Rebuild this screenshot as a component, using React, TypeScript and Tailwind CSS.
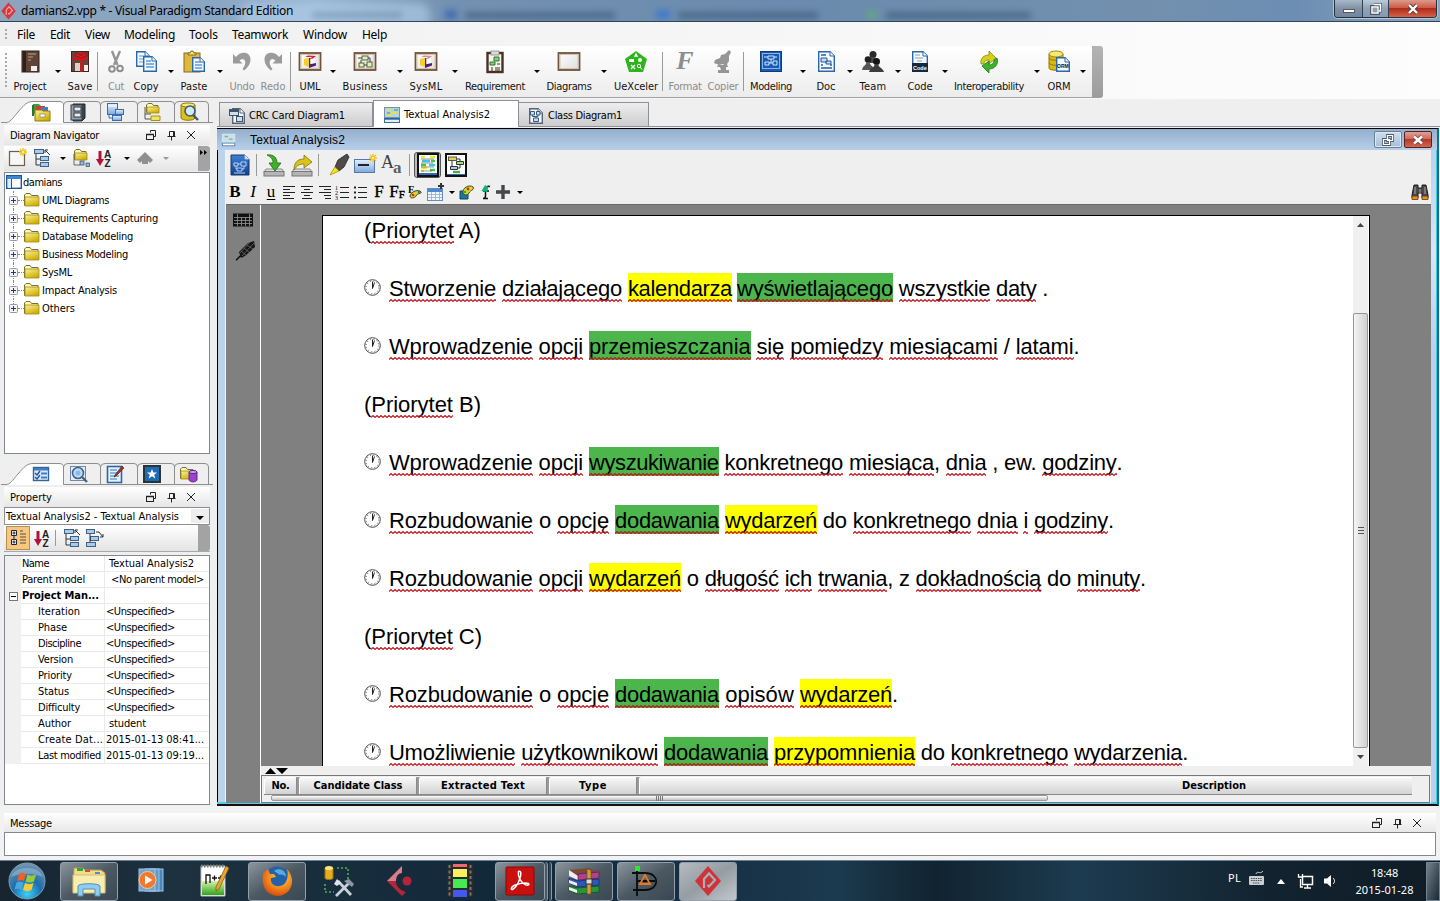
import { useLayoutEffect, useRef, useState } from 'react';
import type { ReactNode } from 'react';

const UI = "font-['DejaVu_Sans_Condensed','Noto_Sans',sans-serif] text-[11px]";

/* Text stretched or tightened with letter spacing to fill a given width. */
function Fit({ w, children, className = '' }: { w: number; children: ReactNode; className?: string }) {
  const ref = useRef<HTMLSpanElement>(null);
  const [ls, setLs] = useState(0);
  useLayoutEffect(() => {
    const el = ref.current;
    if (!el) return;
    const n = (el.textContent || '').length || 1;
    el.style.letterSpacing = '0px';
    const gap = (w - el.getBoundingClientRect().width) / n;
    el.style.letterSpacing = gap + 'px';
    setLs(gap);
  }, [w]);
  return (
    <span ref={ref} className={'inline-block shrink-0 whitespace-pre ' + className} style={{ letterSpacing: ls }}>
      {children}
    </span>
  );
}

function Svg({ s = 24, h, vb, children, className = '' }: { s?: number; h?: number; vb?: string; children: ReactNode; className?: string }) {
  return (
    <svg width={s} height={h ?? s} viewBox={vb ?? `0 0 ${s} ${h ?? s}`} className={'block shrink-0 ' + className} fill="none">
      {children}
    </svg>
  );
}

const Defs = () => (
  <svg width="0" height="0" className="absolute">
    <defs>
      <linearGradient id="fold" x1="0" y1="0" x2="0.6" y2="1"><stop offset="0" stopColor="#fbf29a" /><stop offset="1" stopColor="#cfae00" /></linearGradient>
      <linearGradient id="blue" x1="0" y1="0" x2="0" y2="1"><stop offset="0" stopColor="#e4f1fd" /><stop offset="1" stopColor="#7ba9dc" /></linearGradient>
      <linearGradient id="navy" x1="0" y1="0" x2="0" y2="1"><stop offset="0" stopColor="#3f7fd2" /><stop offset="1" stopColor="#12418f" /></linearGradient>
      <linearGradient id="board" x1="0" y1="0" x2="1" y2="1"><stop offset="0" stopColor="#ffffff" /><stop offset="1" stopColor="#dcdcdc" /></linearGradient>
      <linearGradient id="grn" x1="0" y1="0" x2="0" y2="1"><stop offset="0" stopColor="#d8f0b0" /><stop offset="1" stopColor="#2fa51c" /></linearGradient>
      <radialGradient id="orb" cx="0.5" cy="0.85" r="0.8"><stop offset="0" stopColor="#3fd0f5" /><stop offset="0.5" stopColor="#1a6fae" /><stop offset="1" stopColor="#6f93ad" /></radialGradient>
      <radialGradient id="ffx" cx="0.6" cy="0.3" r="0.8"><stop offset="0" stopColor="#ffd93b" /><stop offset="0.6" stopColor="#f07a1a" /><stop offset="1" stopColor="#c93d0c" /></radialGradient>
    </defs>
  </svg>
);

/* Zigzag long enough for the widest word; the svg around it clips it. */
const ZIGZAG = 'M0 2.5' + 'l2 -2l2 2'.repeat(50);

const Star = ({ x, y }: { x: number; y: number }) => (
  <g transform={`translate(${x} ${y})`} stroke="#f0c419" strokeWidth="1.4"><path d="M0-4V4M-4 0H4M-3-3L3 3M3-3L-3 3" /><circle r="1.2" fill="#fff3a0" stroke="none" /></g>
);
const Folder = ({ x = 0, y = 0, w = 15, h = 11 }: { x?: number; y?: number; w?: number; h?: number }) => (
  <g transform={`translate(${x} ${y})`}>
    <path d={`M.5 ${h + 0.5}V2L2 .5H6L7.5 2.5H${w - 1}V${h + 0.5}Z`} fill="#fff8b8" stroke="#77702e" />
    <path d={`M1 4H${w}V${h + 1}H1Z`} fill="url(#fold)" stroke="#a08c1c" strokeWidth=".8" />
  </g>
);
const Page = ({ x = 0, y = 0, w = 15, h = 19, c = '#2b67ad' }: { x?: number; y?: number; w?: number; h?: number; c?: string }) => (
  <g transform={`translate(${x} ${y})`}>
    <path d={`M.7.7H${w - 5}L${w - 0.7} 5V${h - 0.7}H.7Z`} fill="#f4f9ff" stroke={c} strokeWidth="1.4" />
    <path d={`M${w - 5} .7V5H${w - 0.7}`} fill="#fff" stroke={c} />
  </g>
);
const Frame = ({ children }: { children?: ReactNode }) => (
  <g><rect x="1.5" y="3" width="21" height="17" fill="url(#board)" stroke="#70523d" strokeWidth="1.8" /><rect x="3" y="4.5" width="18" height="14" stroke="#d6c3ac" />{children}</g>
);
const Cube = ({ c }: { c: string }) => (
  <g><path d="M6 9L11 8V17L6 15Z" fill="#f6cf2b" /><path d="M11 8L12.500 8V17L11 17.500Z" fill="#4b2178" /><path d="M12.500 9L17 8V13L12.500 14.500Z" fill="#fff" /><path d="M11 14.500L18 13V15.500L11 18Z" fill="#4b2178" /><path d="M7 7L10 5.500L18 6L15 8.500L12 9L14 7Z" fill={c} /></g>
);
const Diamond = ({ fill, line }: { fill: string; line: string }) => (
  <g><path d="M17 2L30 17L17 32L4 17Z" fill={fill} /><path d="M13 24V15L18 9.500L24 16L18 22.500L16.500 21" stroke={line} strokeWidth="2.200" /></g>
);

const I: Record<string, ReactNode> = {
  project: <Svg><rect x="4" y="1" width="17" height="21" fill="#5f4436" stroke="#32221a" /><path d="M5 1H8V22H5Z" fill="#2e2019" /><path d="M10 4H18M10 7H15M10 10H13" stroke="#b8a294" /><rect x="13" y="16" width="6" height="5" fill="#eee" /></Svg>,
  save: <Svg><rect x="3.500" y="1.500" width="17" height="20" fill="#62473a" stroke="#3a2820" /><rect x="7" y="13" width="5" height="8" fill="#d9d2cc" /><rect x="16" y="15" width="4" height="6" fill="#eee" /><path d="M13.500 2V22M4 8.500H20" stroke="#d8141c" strokeWidth="2.400" /><path d="M13 8L7 5.500L7.500 2.500L13 5.500L18.500 2.500L19 5.500Z" fill="#e11a22" stroke="#8e0d12" strokeWidth=".7" /></Svg>,
  cut: <Svg><path d="M8 1L13.500 15M16 1L10 15" stroke="#959595" strokeWidth="2.400" /><circle cx="8" cy="19" r="2.800" stroke="#8f8f8f" strokeWidth="2" /><circle cx="16" cy="18.500" r="2.800" stroke="#8f8f8f" strokeWidth="2" /></Svg>,
  copy: <Svg><Page x={2} y={1} w={14} h={16} /><path d="M5 6H10M5 9H12M5 12H9" stroke="#5a9be0" /><Page x={9} y={6} w={14} h={16} /><path d="M12 11H17M12 14H20M12 17H20" stroke="#5a9be0" strokeWidth="1.4" /></Svg>,
  paste: <Svg><rect x="2" y="3" width="16" height="19" fill="#e0b83a" stroke="#8a6a1c" /><path d="M6 5V3H8L9 1H11L12 3H14V5Z" fill="#f8e277" stroke="#8a6a1c" /><Page x={10} y={7} w={13} h={15} /><path d="M13 12H18M13 15H20M13 18H20" stroke="#5a9be0" strokeWidth="1.3" /></Svg>,
  undo: <Svg><path d="M3 4L6 7C10 1 20 1 20.500 9C20.500 15 17 18 14 20.500L12.500 19C15 16 16.500 12 14 9.500C12.500 8.500 11 9 9.500 10.500L12.500 13.500H3Z" fill="#9b9b9b" /></Svg>,
  redo: <Svg><path d="M21 4L18 7C14 1 4 1 3.500 9C3.500 15 7 18 10 20.500L11.500 19C9 16 7.500 12 10 9.500C11.500 8.500 13 9 14.500 10.500L11.500 13.500H21Z" fill="#9b9b9b" /></Svg>,
  uml: <Svg><Frame><Cube c="#e0203c" /></Frame></Svg>,
  sysml: <Svg><Frame><Cube c="#e68a95" /></Frame></Svg>,
  business: <Svg><Frame><rect x="9" y="6" width="6" height="4" fill="#e8edc1" stroke="#55663c" /><rect x="6" y="13" width="5" height="4" fill="#e8edc1" stroke="#55663c" /><rect x="14" y="12" width="5" height="5" fill="#e8edc1" stroke="#55663c" /><path d="M5 8H9M15 8H17V12M8 10V13M11 15H14" stroke="#3a4430" /></Frame></Svg>,
  requirement: <Svg><rect x="4.5" y="3" width="15" height="19" fill="#f6f4ee" stroke="#4b3021" strokeWidth="2.4" /><rect x="8" y="1" width="8" height="4" fill="#dadada" stroke="#888" strokeWidth=".8" /><path d="M11 7H16V11H11ZM7 12H12V15H7Z" fill="#8dcc80" stroke="#267a28" /><path d="M8 18H10M12 18H17M8 20H10M12 20H17M14 14H17" stroke="#333" /></Svg>,
  diagrams: <Svg><Frame /></Svg>,
  uex: <Svg><path d="M12 1L23 9L19 22H5L1 9Z" fill="#2bb41c" /><rect x="5" y="9" width="5" height="3" fill="#fff" /><circle cx="16" cy="10" r="2" fill="#fff" /><path d="M12 4L13 6H11ZM7 15L11 19M11 15L7 19" stroke="#fff" strokeWidth="1.3" fill="#fff" /><circle cx="15" cy="16" r="1.7" stroke="#fff" /><path d="M16 17L18 19.500" stroke="#fff" /></Svg>,
  copier: <Svg><path d="M18 0L14 4L10 5L9 8L4 10L3 13L8 15L12 14L13 15H7L6 17L9 17L10 20H7V23H18V20H15L15 17H17L16 14L18 11V6L20 2Z" fill="#959595" /></Svg>,
  modeling: <Svg><rect x="1.5" y="1.5" width="21" height="20" fill="#175bb4" stroke="#163b72" /><rect x="3.5" y="3.5" width="17" height="15" stroke="#83b6ee" /><path d="M9 6H15V9H9ZM6 12H10V15H6ZM14 11H18V15H14ZM5 7H9M15 7H18M12 9V13M10 13H14" stroke="#d5e8fb" /></Svg>,
  doc: <Svg><Page x={4} y={1} w={17} h={21} /><path d="M7 5H12M7 18H18M7 15H9M16 15H18" stroke="#2b5c98" strokeWidth="1.3" /><path d="M7 8H13V12H7ZM12 11H17V14H12Z" fill="#c5def7" stroke="#285a95" /></Svg>,
  team: <Svg><circle cx="12" cy="4.500" r="3.500" fill="#2b2b2b" /><path d="M10 7H14L15 10L18 13H7L9 10Z" fill="#4a4a4a" /><circle cx="7" cy="9.500" r="3.300" fill="#202020" /><path d="M1 20C2 15 5 16 5.500 12H8.500C9 16 12 15 13 20Z" fill="#555" /><circle cx="15.500" cy="11.500" r="3.500" fill="#151515" /><path d="M8 22C9 18 13 18 14 14H17C18 18 22 18 23 22Z" fill="#3c3c3c" /></Svg>,
  code: <Svg><Page x={4} y={1} w={16} h={17} /><path d="M7 5H12M7 8H15M9 11H14" stroke="#8ba0b6" /><rect x="4" y="13" width="16" height="9" fill="#15283e" /><text x="5" y="19.500" fontSize="5.500" fontWeight="bold" fill="#fff" fontFamily="Liberation Sans">Code</text></Svg>,
  interop: <Svg><path d="M4 14C3 8 7 5 12 5V1L19 8L12 14V10C9 10 7 11 7 14Z" fill="#d6cf1c" stroke="#7f8912" strokeWidth=".8" /><path d="M20 8C22 14 18 19 12 19V23L5 16L12 11V15C15 15 17 13 17 10Z" fill="#3cb42a" stroke="#267418" strokeWidth=".8" /></Svg>,
  orm: <Svg><path d="M2 4V18C2 21 16 21 16 18V4" fill="#dcb910" stroke="#907900" /><ellipse cx="9" cy="4" rx="7" ry="3" fill="#f6ea70" stroke="#a08912" /><path d="M2 8C3 11 15 11 16 8M2 13C3 16 15 16 16 13" stroke="#8f7b05" /><Page x={9} y={7} w={14} h={15} /><text x="10" y="17.500" fontSize="5" fontWeight="bold" fill="#111" fontFamily="Liberation Sans">ORM</text></Svg>,
  /* side tabs */
  tabFolders: <Svg s={20}><path d="M2 2H8L10 4V12H2Z" fill="#3aa03a" /><path d="M5 4H14V12H5Z" fill="#cf3a3a" /><path d="M10 5H17V12H10Z" fill="#4a79c8" /><path d="M2 3V14" stroke="#2b742b" strokeWidth="2" /><path d="M4 8H11L12 9H19V19H4Z" fill="url(#fold)" stroke="#8d7a14" /><rect x="9" y="12" width="5" height="3" fill="#fff" stroke="#887" strokeWidth=".7" /></Svg>,
  tabBook: <Svg s={20}><path d="M5 2H17V16L14 19H5Z" fill="#3a444e" stroke="#20282f" /><rect x="3" y="3" width="11" height="15" fill="#92a2b0" stroke="#323c46" /><rect x="6" y="5" width="7" height="4" fill="#e8edf3" stroke="#333" /><rect x="6" y="11" width="7" height="4" fill="#e8edf3" stroke="#333" /></Svg>,
  tabClasses: <Svg s={20}><rect x="2.5" y="1.5" width="10" height="11" fill="url(#blue)" stroke="#3c6ba9" /><path d="M3 4H12" stroke="#fff" /><rect x="10.5" y="7.5" width="8" height="5" fill="url(#blue)" stroke="#3c6ba9" /><rect x="7.5" y="13.5" width="9" height="5" fill="url(#blue)" stroke="#3c6ba9" /><path d="M4 13V16H7" stroke="#3c6ba9" /></Svg>,
  tabTree: <Svg s={20}><Folder x={4} y={1} w={13} h={9} /><path d="M3 5V17H9M3 12H9" stroke="#555" /><path d="M9 14H18V18.500H9Z" fill="#f3e35d" stroke="#9f8f1c" /></Svg>,
  tabSearch: <Svg s={20}><path d="M2 3V16C3 19 15 19 16 16V3" fill="#ddc11a" stroke="#8b7910" /><ellipse cx="9" cy="3" rx="7" ry="2" fill="#f5eb86" stroke="#8b7910" /><circle cx="11" cy="9" r="5" fill="#cfe8fa" stroke="#3f5a70" strokeWidth="1.6" /><path d="M14 13L19 18" stroke="#3f5a70" strokeWidth="2.4" /></Svg>,
  tabProps: <Svg s={20}><rect x="2.500" y="3.500" width="15" height="13" fill="#dcebfb" stroke="#33659b" strokeWidth="1.4" /><rect x="3" y="4" width="14" height="2.500" fill="#3f7dc2" /><path d="M4 9L6 11L9 7M4 13L6 15L9 11" stroke="#1d54a8" strokeWidth="1.4" /><path d="M10 9.500H16M10 13.500H16" stroke="#3f7dc2" strokeWidth="2" /></Svg>,
  tabMag: <Svg s={20}><rect x="2.5" y="2.5" width="15" height="14" fill="#e8edf4" stroke="#7089a6" /><circle cx="10" cy="9" r="5.5" fill="#bcdcf8" stroke="#41638b" strokeWidth="1.6" /><circle cx="10" cy="9" r="2.5" fill="#87b9ea" /><path d="M14 13L19 18" stroke="#41638b" strokeWidth="2.4" /></Svg>,
  tabNote: <Svg s={20}><rect x="2.5" y="2.5" width="14" height="16" fill="#e6f2fe" stroke="#2c67a9" strokeWidth="1.6" /><path d="M5 6H12M5 9H14M5 12H14M5 15H12" stroke="#3576ba" /><path d="M17 2L10 11L9 13L11 12L19 4Z" fill="#a3342d" stroke="#4b1512" strokeWidth=".6" /></Svg>,
  tabStar: <Svg s={20}><rect x="2" y="2" width="16" height="16" fill="#1b6cb3" stroke="#2c3235" strokeWidth="2" /><path d="M10 5L11.300 8.500H15L12.200 10.800L13.300 14.500L10 12.300L6.700 14.500L7.800 10.800L5 8.500H8.700Z" fill="#fff" /></Svg>,
  tabPurple: <Svg s={20}><Folder x={1} y={3} w={14} h={11} /><path d="M10 8V16C11 18.500 17 18.500 18 16V8" fill="#9a42cf" stroke="#612491" /><ellipse cx="14" cy="8" rx="4" ry="1.6" fill="#cf96ee" stroke="#612491" /></Svg>,
  /* panel toolbars */
  newDoc: <Svg s={20}><rect x="1.5" y="3.5" width="15" height="14" fill="#f7f7f5" stroke="#6a5e55" strokeWidth="1.2" /><Star x={15} y={4} /></Svg>,
  hier: <Svg s={20}><g fill="#a9cbec" stroke="#3f5f83"><rect x="2.5" y="1.5" width="9" height="4" /><rect x="8.5" y="8.5" width="8" height="4" /><rect x="8.5" y="14.5" width="8" height="4" /></g><path d="M4 6V17H8M4 11H8M18 7L13 2M13 5V2H16" stroke="#333" /></Svg>,
  hierDown: <Svg s={20}><g fill="#a9cbec" stroke="#3f5f83"><rect x="1.5" y="1.5" width="8" height="4" /><rect x="5.5" y="8.5" width="8" height="4" /><rect x="1.5" y="14.5" width="9" height="4" /></g><path d="M11 4H14L18 9M15 9H18V6M5 6V14" stroke="#333" /></Svg>,
  folderOpen: <Svg s={20}><Folder x={3} y={1} w={13} h={10} /><path d="M3 6V17H9" stroke="#666" /><rect x="9" y="13" width="4" height="4" fill="#8eb8df" stroke="#345" strokeWidth=".7" /><rect x="15" y="15" width="3.5" height="3.5" fill="#8eb8df" stroke="#345" strokeWidth=".7" /></Svg>,
  sort: <Svg s={20}><path d="M5 3V13" stroke="#b3123d" strokeWidth="3" /><path d="M1 11H9L5 18Z" fill="#b3123d" /><text x="9" y="9.5" fontSize="10" fontWeight="bold" fill="#222" fontFamily="Liberation Sans">A</text><text x="9.5" y="18.500" fontSize="10" fontWeight="bold" fill="#222" fontFamily="Liberation Sans">Z</text></Svg>,
  up: <Svg s={20}><path d="M10 4L18 12L15 15L13 13V16H7V13L5 15L2 12Z" fill="#8f8f8f" /></Svg>,
  categ: <Svg s={20}><path d="M3.500 2.500H8.500V7.500H3.500ZM3.500 11.500H8.500V16.500H3.500Z" fill="#e8eefb" stroke="#223" /><path d="M4.500 5H7.500M6 3.500V6.500M4.500 14H7.500M6 12.500V15.500M6 7.500V11" stroke="#223" /><path d="M12 3H15M12 6H18M12 9H18M12 12H18M12 15H18" stroke="#8a7a58" strokeWidth="1.4" /></Svg>,
  table16: <Svg s={16}><rect x=".7" y="1.7" width="14.6" height="12.6" fill="#fff" stroke="#1d5796" strokeWidth="1.4" /><path d="M1 2H15V5H1Z" fill="#3d86d0" /><path d="M5.5 5V14" stroke="#1d5796" /><path d="M2 6H5V14H2Z" fill="#d9eafa" /></Svg>,
  /* editor toolbar */
  bigdoc: <Svg><path d="M3 2H17L21 6V22H3Z" fill="url(#navy)" stroke="#17386d" /><path d="M17 2V6H21" fill="#fff" stroke="#a4c3ec" /><path d="M6 10H10V13H6ZM13 9H18V13H13ZM9 15H14V18H9ZM10 11H13M8 13V16H9M16 13V16H14M6 20H17" stroke="#b5d2f6" /></Svg>,
  imp: <Svg><path d="M4 16H20L22 19H2Z" fill="#ddd" stroke="#888" /><rect x="2" y="18.500" width="20" height="4.500" fill="#b5b5b5" stroke="#777" /><path d="M5 2C12 1 15 5 15 10H19L13 18L7 10H11C11 6 9 4 5 2Z" fill="#40b124" stroke="#1f6b10" strokeWidth=".8" /></Svg>,
  exp: <Svg><path d="M4 16H20L22 19H2Z" fill="#ddd" stroke="#888" /><rect x="2" y="18.500" width="20" height="4.500" fill="#b5b5b5" stroke="#777" /><path d="M4 17C4 9 8 6 14 6V2L22 9L14 15V11C10 11 7 12 4 17Z" fill="#d9c419" stroke="#7d7410" strokeWidth=".8" /></Svg>,
  marker: <Svg><path d="M20 1L11 7L8 14L12 18L17 14L22 4Z" fill="#4f4b49" stroke="#222" strokeWidth=".8" /><path d="M8 14L4 20L3 22L12 18Z" fill="#f4e323" stroke="#a0930c" strokeWidth=".8" /></Svg>,
  rect: <Svg><rect x="1.5" y="6.5" width="20" height="13" fill="url(#blue)" stroke="#5977a6" /><path d="M5 12H16" stroke="#223" strokeWidth="2" /><Star x={20} y={5} /></Svg>,
  tog1: <Svg><rect x="2" y="1" width="20" height="22" fill="#fff" stroke="#111" strokeWidth="2" /><path d="M5 4H9M14 4H19M5 15H11M5 18H8" stroke="#ece936" strokeWidth="2.400" /><path d="M6 8H14M13 12H19" stroke="#44c3e6" strokeWidth="2.400" /><path d="M15 8H19M5 12H10M14 17H19" stroke="#48c746" strokeWidth="2.400" /><path d="M5 6H18M5 10H17M5 14H18M5 18H16" stroke="#555" strokeWidth=".6" /><rect x="3" y="20" width="18" height="2" fill="#2e69b3" /></Svg>,
  tog2: <Svg><rect x="2" y="1" width="20" height="22" fill="#fff" stroke="#111" strokeWidth="2" /><path d="M12.500 8.500H19.500V11.500H12.500Z" fill="#a4e07c" stroke="#333" /><path d="M6.500 13.500H13.500V16.500H6.500Z" fill="#a9cdf0" stroke="#333" /><path d="M12 6H16V8M8 7V13M16 12V15H14" stroke="#333" /><rect x="4.500" y="4" width="8" height="3.500" fill="#e8cc55" stroke="#554" /><path d="M9 19H16" stroke="#3fb33c" strokeWidth="2.400" /><rect x="3" y="21" width="18" height="1" fill="#2e69b3" /></Svg>,
  alL: <Svg s={16}><path d="M2 2.5H14M2 5.5H9M2 8.5H14M2 11.5H9M2 14.5H13" stroke="#222" /></Svg>,
  alC: <Svg s={16}><path d="M2 2.5H14M5 5.5H11M2 8.5H14M5 11.5H11M3 14.5H13" stroke="#222" /></Svg>,
  alR: <Svg s={16}><path d="M2 2.5H14M7 5.5H14M2 8.5H14M7 11.5H14M8 14.5H14" stroke="#222" /></Svg>,
  num: <Svg s={16}><path d="M5 3.5H14M5 8.5H14M5 13.5H14" stroke="#222" /><text x="0" y="5.5" fontSize="6" fill="#000" fontFamily="Liberation Serif">1</text><text x="0" y="10.5" fontSize="6" fill="#000" fontFamily="Liberation Serif">2</text><text x="0" y="15.5" fontSize="6" fill="#000" fontFamily="Liberation Serif">3</text></Svg>,
  bul: <Svg s={16}><path d="M5 3.5H14M5 8.5H14M5 13.5H14" stroke="#222" /><path d="M1 2.5H3V4.5H1ZM1 7.5H3V9.5H1ZM1 12.5H3V14.5H1Z" fill="#222" /></Svg>,
  pal: <Svg s={16}><text x="1" y="8.500" fontSize="10" fontWeight="bold" fill="#000" fontFamily="Liberation Serif">F</text><path d="M3 12C4 7 12 5 14 8C15 10 10 9 9 12C8 14 3 15 3 12Z" fill="#e3cf22" stroke="#38460c" /><circle cx="6" cy="11" r="1.3" fill="#d23" /><circle cx="12" cy="8" r="1.2" fill="#27a" /></Svg>,
  tbl: <Svg s={18}><rect x=".5" y="5.5" width="15" height="12" fill="#eef5fd" stroke="#6a8bb5" /><rect x="1" y="6" width="14" height="3" fill="#4a8ad2" /><path d="M1 11.5H15M1 14.5H15M4.5 9V17M8.5 9V17M12.5 9V17" stroke="#8fadd0" strokeWidth=".8" /><path d="M14 0V6M11 3H17" stroke="#333" strokeWidth="2" /></Svg>,
  paint: <Svg s={16}><path d="M1 7H9V15H1Z" fill="#1d7598" stroke="#0e4862" /><path d="M4 9C3 4 10 0 14 3C16 6 11 6 10 9C8 12 5 11 4 9Z" fill="#e6d52c" stroke="#394a10" /><circle cx="9" cy="5" r="1.4" fill="#c23" /><circle cx="6" cy="8" r="1.3" fill="#2a5" /></Svg>,
  greenf: <Svg s={16}><path d="M13 2.500C10 1.500 9 3 8.500 6V12C8.500 13.500 8 14.500 6 14.500H11M6 7H12" stroke="#111" strokeWidth="1.500" /><path d="M4.500 7L8 1L11.500 3L10 8Z" fill="#12b37a" /></Svg>,
  plus: <Svg s={14}><path d="M7 0V14M0 7H14" stroke="#45484b" strokeWidth="3.4" /></Svg>,
  bino: <Svg s={18}><path d="M3 2H7V5H11V2H15L17 12V15H11V10H7V15H1V12Z" fill="#4a4a4a" stroke="#1c1c1c" /><path d="M4 4V11M14 4V11M9 6V10" stroke="#aaa" /><path d="M1 13H7V16.5H1ZM11 13H17V16.5H11Z" fill="#ee8c16" stroke="#4d2a05" strokeWidth=".7" /></Svg>,
  crc: <Svg s={18}><Page x={4} y={1} w={13} h={16} c="#566473" /><rect x="1.5" y="2.5" width="9" height="6" fill="#cfdff0" stroke="#40556c" /><path d="M1 4H10" stroke="#40556c" strokeWidth="2" /><rect x="8.5" y="9.5" width="6" height="5" fill="#cfdff0" stroke="#40556c" /></Svg>,
  ta: <Svg s={18}><rect x="1.5" y="1.5" width="15" height="10" fill="#aed5e9" stroke="#7b91a0" /><path d="M4 4H8M9 7H14M5 9H9" stroke="#eadf4f" strokeWidth="2" /><path d="M11 4H15M4 7H7" stroke="#5eb567" strokeWidth="1.6" /><rect x="1.5" y="12.5" width="15" height="4" fill="#e3edf6" stroke="#3a6ba0" /><path d="M2 13H16" stroke="#26639f" strokeWidth="1.4" /></Svg>,
  cls: <Svg s={18}><Page x={2} y={1} w={14} h={16} c="#566473" /><path d="M3.5 4.5H7.5V8H3.5ZM9.5 4.5H13V8H9.5ZM6.5 11H11.5V14.5H6.5Z" fill="#c4dcf4" stroke="#3b5876" /><path d="M5.5 8V9.5H11V8M9 9.5V11" stroke="#3b5876" /></Svg>,
  /* panel window controls */
  restore: <Svg s={12}><path d="M4.500 3.500V1.500H9.500V7.500H8" stroke="#222" /><rect x=".5" y="5.500" width="7" height="5" stroke="#222" /><path d="M0 5.500H8" stroke="#222" strokeWidth="1.500" /></Svg>,
  pin: <Svg s={12}><path d="M3.500 7V2.500H8.500V7M1.500 7.500H9.500M5.500 8V11.500M7.500 2V7" stroke="#222" /></Svg>,
  close: <Svg s={12}><path d="M2 2L10 10M10 2L2 10" stroke="#222" /></Svg>,
};

const Tri = ({ c = '#000' }: { c?: string }) => <Svg s={6} h={3}><path d="M0 0H6L3 3Z" fill={c} /></Svg>;
const Cell = ({ cls, children }: { cls: string; children: ReactNode }) => <div className={'flex shrink-0 items-center justify-center ' + cls}>{children}</div>;
const Arrow = ({ cls, c }: { cls: string; c?: string }) => <Cell cls={'w-[12px] ' + cls}><Tri c={c} /></Cell>;

function Tool({ cls, icon, label, w, dim }: { cls: string; icon: ReactNode; label: string; w: number; dim?: boolean }) {
  return (
    <div className={'flex shrink-0 flex-col items-center pt-[4px] ' + cls}>
      {icon}
      <Fit w={w} className={'mt-[6px] leading-[14px] ' + (dim ? 'text-[#8c8c8c]' : 'text-[#111]')}>{label}</Fit>
    </div>
  );
}
const Sep = ({ cls }: { cls: string }) => <div className={'w-px shrink-0 bg-[#9a9a9a] ' + cls} />;

function TitleBar() {
  return (
    <header className="relative flex h-[22px] shrink-0 overflow-hidden border-b border-[#33435a] bg-[linear-gradient(90deg,#8da4bd_0%,#8ba6c2_15%,#98b6d4_22%,#7391b1_31%,#6a8bad_55%,#7290ae_80%,#6c8eb3_90%,#8da5bd_100%)]">
      <div className="absolute left-[240px] top-[3px] h-[24px] w-[190px] rounded-t-xl bg-[#b4cfea] opacity-60 blur-[4px]" />
      <div className="absolute left-[312px] top-[12px] h-[6px] w-[90px] bg-[#3f5f80] opacity-35 blur-[3px]" />
      <div className="absolute left-[445px] top-[10px] h-[9px] w-[12px] bg-[#2d5fae] opacity-70 blur-[3px]" />
      <div className="absolute left-[465px] top-[12px] h-[7px] w-[150px] bg-[#2e4a68] opacity-50 blur-[3px]" />
      <div className="absolute left-[656px] top-[10px] h-[9px] w-[14px] bg-[#2e74d4] opacity-70 blur-[3px]" />
      <div className="absolute left-[678px] top-[12px] h-[7px] w-[140px] bg-[#2e4a68] opacity-50 blur-[3px]" />
      <div className="absolute left-[866px] top-[10px] h-[9px] w-[12px] bg-[#64ae76] opacity-60 blur-[3px]" />
      <div className="absolute left-[886px] top-[12px] h-[7px] w-[145px] bg-[#2e4a68] opacity-50 blur-[3px]" />
      <div className="relative flex w-full items-start">
        <Svg s={17} h={18} className="mt-[2px]" vb="3 1 28 32"><Diamond fill="#d8363d" line="#f0a0a3" /></Svg>
        <Fit w={272} className="ml-[4px] mt-[2px] font-['Noto_Sans'] text-[12px] leading-[17px] text-black">damians2.vpp * - Visual Paradigm Standard Edition</Fit>
        <div className="ml-auto mr-[3px] flex h-[18px] overflow-hidden rounded-b-[4px] border border-t-0 border-[#26313f] shadow-[0_0_0_1px_#b6c5d5]">
          <div className="flex w-[28px] items-center justify-center border-r border-[#35404d] bg-gradient-to-b from-[#a9b9c9] via-[#8091a4] to-[#71869d]"><div className="mt-[4px] h-[4px] w-[12px] border border-[#555c66] bg-white" /></div>
          <div className="flex w-[26px] items-center justify-center border-r border-[#35404d] bg-gradient-to-b from-[#bccbda] via-[#8fa3b8] to-[#829ab2]"><Svg s={12}><path d="M4 1H11V8H9M1.5 3.5H8.5V10.5H1.5Z" stroke="#525a66" strokeWidth="3" /><path d="M4 1.5H10.5V8H9M2 4H8V10H2Z" stroke="#fff" strokeWidth="1.5" /></Svg></div>
          <div className="flex w-[47px] items-center justify-center bg-[linear-gradient(180deg,#dc9a8d_0%,#cc5c48_45%,#b22c17_50%,#d4624a_100%)]"><Svg s={12}><path d="M2 2L10 10M10 2L2 10" stroke="#5d3a3a" strokeWidth="4" /><path d="M2 2L10 10M10 2L2 10" stroke="#fff" strokeWidth="2.4" /></Svg></div>
        </div>
      </div>
    </header>
  );
}

const Grip = ({ cls }: { cls: string }) => <div className={'w-[2px] shrink-0 bg-[repeating-linear-gradient(180deg,#a9a9a9_0_2px,transparent_2px_4px)] ' + cls} />;

function MenuBar() {
  return (
    <nav className="flex h-[24px] shrink-0 items-center bg-gradient-to-r from-[#efefef] to-[#fdfdfd] font-['Noto_Sans'] text-[12px] leading-[17px] text-black">
      <Grip cls="ml-[5px] h-[10px]" />
      <Fit w={18} className="ml-[10px]">File</Fit>
      <Fit w={20} className="ml-[15px]">Edit</Fit>
      <Fit w={25} className="ml-[15px]">View</Fit>
      <Fit w={51} className="ml-[14px]">Modeling</Fit>
      <Fit w={29} className="ml-[14px]">Tools</Fit>
      <Fit w={56} className="ml-[14px]">Teamwork</Fit>
      <Fit w={44} className="ml-[15px]">Window</Fit>
      <Fit w={25} className="ml-[15px]">Help</Fit>
    </nav>
  );
}

function MainToolbar() {
  return (
    <div className="flex h-[53px] shrink-0 bg-gradient-to-r from-[#efefef] to-[#fdfdfd]">
      <div className="flex h-[52px] w-[1092px] shrink-0 border-b border-[#a2a2a2] bg-gradient-to-b from-white to-[#ececec]">
        <Grip cls="ml-[5px] mt-[7px] h-[36px]" />
        <Tool cls="ml-[3px] w-[40px]" icon={I.project} label="Project" w={33} />
        <Arrow cls="ml-[2px]" />
        <Tool cls="ml-[1px] w-[30px]" icon={I.save} label="Save" w={25} />
        <Sep cls="ml-[2px] my-[6px]" />
        <Tool cls="ml-[6px] w-[24px]" icon={I.cut} label="Cut" w={16} dim />
        <Tool cls="ml-[2px] w-[32px]" icon={I.copy} label="Copy" w={25} />
        <Arrow cls="ml-[3px]" />
        <Tool cls="ml-[2px] w-[30px]" icon={I.paste} label="Paste" w={27} />
        <Arrow cls="ml-[5px]" />
        <Tool cls="ml-[2px] w-[28px]" icon={I.undo} label="Undo" w={25} dim />
        <Tool cls="ml-[3px] w-[28px]" icon={I.redo} label="Redo" w={25} dim />
        <Sep cls="ml-[3px] my-[6px]" />
        <Tool cls="ml-[5px] w-[28px]" icon={I.uml} label="UML" w={21} />
        <Arrow cls="ml-[3px]" />
        <Tool cls="ml-[2px] w-[48px]" icon={I.business} label="Business" w={45} />
        <Arrow cls="ml-[5px]" />
        <Tool cls="ml-[2px] w-[36px]" icon={I.sysml} label="SysML" w={33} />
        <Arrow cls="ml-[5px]" />
        <Tool cls="ml-[2px] w-[64px]" icon={I.requirement} label="Requirement" w={60} />
        <Arrow cls="ml-[4px]" />
        <Tool cls="ml-[2px] w-[48px]" icon={I.diagrams} label="Diagrams" w={45} />
        <Arrow cls="ml-[5px]" />
        <Tool cls="ml-[3px] w-[46px]" icon={I.uex} label="UeXceler" w={44} />
        <Sep cls="ml-[3px] my-[6px]" />
        <Tool cls="ml-[4px] w-[36px]" icon={<div className="h-[24px] font-['Liberation_Serif'] text-[26px] font-bold italic leading-[22px] text-[#8d8d8d]">F</div>} label="Format" w={33} dim />
        <Tool cls="ml-[3px] w-[34px]" icon={I.copier} label="Copier" w={31} dim />
        <Sep cls="ml-[3px] my-[6px]" />
        <Tool cls="ml-[4px] w-[46px]" icon={I.modeling} label="Modeling" w={42} />
        <Arrow cls="ml-[3px]" />
        <Tool cls="ml-[5px] w-[24px]" icon={I.doc} label="Doc" w={19} />
        <Arrow cls="ml-[6px]" />
        <Tool cls="ml-[2px] w-[30px]" icon={I.team} label="Team" w={27} />
        <Arrow cls="ml-[4px]" />
        <Tool cls="ml-[2px] w-[28px]" icon={I.code} label="Code" w={25} />
        <Arrow cls="ml-[5px]" />
        <Tool cls="ml-[2px] w-[72px]" icon={I.interop} label="Interoperability" w={70} />
        <Arrow cls="ml-[6px]" />
        <Tool cls="ml-[3px] w-[26px]" icon={I.orm} label="ORM" w={23} />
        <Arrow cls="ml-[5px]" />
      </div>
      <div className="h-[52px] w-[11px] rounded-r-[3px] bg-gradient-to-b from-[#b4b4b4] to-[#9c9c9c]" />
    </div>
  );
}

function SideTabs({ icons }: { icons: string[] }) {
  return (
    <div className="relative h-[24px] w-[213px] shrink-0">
      <svg width="213" height="24" className="absolute left-0 top-0" fill="none">
        <path d="M1 23H6C10 23 12 19 18 12C24 5 27 1.500 33 1.500H59Q63 1.500 63 5V23" fill="#fff" />
        <path d="M1 22.500H6C10 22.500 12 19 18 12C24 5 27 1.500 33 1.500H59Q63.500 1.500 63.500 5V22.500H213M63.500 5Q64 1.500 68 1.500H97Q100.500 1.500 100.500 5V22M100.500 5Q101 1.500 105 1.500H134Q137.500 1.500 137.500 5V22M137.500 5Q138 1.500 142 1.500H171Q174.500 1.500 174.500 5V22M174.500 5Q175 1.500 179 1.500H205Q208.500 1.500 208.500 5V22" stroke="#8e8e8e" />
      </svg>
      <div className="relative flex h-full items-center pl-[22px]">
        {icons.map((k) => <div key={k} className="flex w-[37px] justify-center">{I[k]}</div>)}
      </div>
    </div>
  );
}

function PanelHead({ title, w, cls = '' }: { title: string; w: number; cls?: string }) {
  return (
    <div className={'flex h-[20px] shrink-0 items-center bg-gradient-to-b from-white to-[#e6e6e6] pl-[6px] ' + cls}>
      <Fit w={w} className="pt-[2px]">{title}</Fit>
      <div className="ml-auto flex pr-[13px]"><div className="mr-[8px]">{I.restore}</div><div className="mr-[7px]">{I.pin}</div>{I.close}</div>
    </div>
  );
}

const TREE: [string, number][] = [['UML Diagrams', 67], ['Requirements Capturing', 116], ['Database Modeling', 91], ['Business Modeling', 86], ['SysML', 30], ['Impact Analysis', 75], ['Others', 33]];

function Navigator() {
  return (
    <section className="flex h-[355px] flex-col pt-[1px]">
      <SideTabs icons={['tabFolders', 'tabBook', 'tabClasses', 'tabTree', 'tabSearch']} />
      <PanelHead title="Diagram Navigator" w={89} cls="ml-[4px] mt-[1px] w-[206px]" />
      <div className="ml-[4px] mt-[1px] flex h-[25px] w-[206px] bg-gradient-to-b from-white to-[#e4e4e4]">
        <div className="flex w-[194px] items-center">
          <Cell cls="ml-[4px] w-[20px]">{I.newDoc}</Cell>
          <Cell cls="ml-[4px] w-[20px]">{I.hier}</Cell>
          <Arrow cls="ml-[5px]" />
          <Cell cls="ml-[2px] w-[20px]">{I.folderOpen}</Cell>
          <Cell cls="ml-[4px] w-[20px]">{I.sort}</Cell>
          <Arrow cls="ml-[6px]" />
          <Cell cls="ml-[2px] w-[20px]">{I.up}</Cell>
          <Arrow cls="ml-[5px]" c="#999" />
        </div>
        <div className="w-[12px] rounded-r-[3px] bg-[#a3a3a3] pt-[4px]"><Svg s={10} h={5} className="ml-[2px]"><path d="M0 0L3 2.500L0 5ZM4 0L7 2.500L4 5Z" fill="#000" /></Svg></div>
      </div>
      <div className="ml-[4px] mt-[1px] h-[283px] w-[206px] border border-[#828790] bg-white">
        <div className="flex h-[18px] items-center pl-[1px]">{I.table16}<Fit w={39} className="ml-[1px] pt-[2px]">damians</Fit></div>
        {TREE.map(([t, w], i) => (
          <div key={t} className="relative flex h-[18px] items-center pl-[4px] pt-[1px]">
            <div className={'absolute left-[8px] top-0 w-px border-l border-dotted border-[#888] ' + (i === 6 ? 'h-[9px]' : 'h-[18px]')} />
            <div className="absolute left-[13px] top-[9px] w-[6px] border-t border-dotted border-[#888]" />
            <Svg s={9} className="relative"><rect x=".5" y=".5" width="8" height="8" rx="1" fill="#f4f4f4" stroke="#8e9bb0" /><path d="M2 4.500H7M4.500 2V7" stroke="#223b80" /></Svg>
            <Svg s={17} h={14} className="ml-[6px]"><Folder w={15} h={12} /></Svg>
            <Fit w={w} className="ml-[1px] pt-[1px]">{t}</Fit>
          </div>
        ))}
      </div>
    </section>
  );
}

type PropRow = [string, number, string, number, string, string];
const PROPS: PropRow[] = [
  ['Name', 27, 'Textual Analysis2', 85, 'pl-[1px]', 'pl-[4px]'],
  ['Parent model', 63, '<No parent model>', 93, 'pl-[1px]', 'pl-[6px]'],
  ['Project Man...', 77, '', 0, 'pl-[1px] font-bold', ''],
  ['Iteration', 42, '<Unspecified>', 69, 'pl-[17px]', 'pl-[1px]'],
  ['Phase', 29, '<Unspecified>', 69, 'pl-[17px]', 'pl-[1px]'],
  ['Discipline', 43, '<Unspecified>', 69, 'pl-[17px]', 'pl-[1px]'],
  ['Version', 35, '<Unspecified>', 69, 'pl-[17px]', 'pl-[1px]'],
  ['Priority', 34, '<Unspecified>', 69, 'pl-[17px]', 'pl-[1px]'],
  ['Status', 31, '<Unspecified>', 69, 'pl-[17px]', 'pl-[1px]'],
  ['Difficulty', 42, '<Unspecified>', 69, 'pl-[17px]', 'pl-[1px]'],
  ['Author', 33, 'student', 37, 'pl-[17px]', 'pl-[4px]'],
  ['Create Dat...', 65, '2015-01-13 08:41...', 98, 'pl-[17px]', 'pl-[1px]'],
  ['Last modified', 63, '2015-01-13 09:19...', 98, 'pl-[17px]', 'pl-[1px]'],
];

function Property() {
  return (
    <section className="mt-[8px] flex flex-col">
      <SideTabs icons={['tabProps', 'tabMag', 'tabNote', 'tabStar', 'tabPurple']} />
      <PanelHead title="Property" w={42} cls="ml-[4px] mt-[1px] w-[206px]" />
      <div className="ml-[4px] flex h-[18px] w-[206px] items-center border border-[#8d9096] bg-white pl-[1px]">
        <Fit w={173} className="pt-[2px]">Textual Analysis2 - Textual Analysis</Fit>
        <div className="ml-auto flex h-[14px] w-[18px] items-center justify-center bg-[#eee]"><Svg s={8} h={4} className="mt-[4px]"><path d="M0 0H8L4 4Z" fill="#000" /></Svg></div>
      </div>
      <div className="ml-[4px] flex h-[27px] w-[206px] border-b border-[#a8a8a8] bg-gradient-to-b from-white to-[#e4e4e4]">
        <div className="flex w-[194px] items-center">
          <div className="ml-[2px] flex h-[24px] w-[24px] items-center justify-center border border-[#b58f55] bg-[#f8c67c]">{I.categ}</div>
          <div className="ml-[3px]">{I.sort}</div>
          <Sep cls="ml-[2px] h-[16px]" />
          <div className="ml-[6px]">{I.hier}</div>
          <div className="ml-[3px]">{I.hierDown}</div>
        </div>
        <div className="w-[12px] rounded-r-[3px] bg-[#a3a3a3]" />
      </div>
      <div className="ml-[4px] mt-[3px] h-[250px] w-[206px] border border-[#828790] bg-white">
        {PROPS.map(([k, w, v, vw, kc, vc]) => (
          <div key={k} className="flex h-[16px] leading-[15px]">
            <div className="flex w-[16px] items-center justify-center bg-[#f0f0f0]">
              {k.startsWith('Project') && <Svg s={9}><rect x=".5" y=".5" width="8" height="8" fill="#fff" stroke="#777" /><path d="M2 4.500H7" stroke="#000" /></Svg>}
            </div>
            <div className={'w-[84px] overflow-hidden border-b border-r border-[#eaeaea] ' + kc}><Fit w={w}>{k}</Fit></div>
            <div className={'flex-1 overflow-hidden border-b border-[#eaeaea] ' + vc}>{v && <Fit w={vw}>{v}</Fit>}</div>
          </div>
        ))}
      </div>
    </section>
  );
}

function EditorTabs() {
  return (
    <div className="flex h-[28px] shrink-0 items-end border-b border-[#8d9096] pl-[2px]">
      <div className="flex h-[24px] w-[154px] items-center border border-b-0 border-[#8d9096] bg-gradient-to-b from-[#eee] to-[#cdcdcd] pl-[8px] pt-[3px]">{I.crc}<Fit w={96} className="ml-[3px] pt-[1px]">CRC Card Diagram1</Fit></div>
      <div className="-mb-px flex h-[27px] w-[146px] items-center border border-b-0 border-[#8d9096] bg-white pl-[9px] pt-[1px]">{I.ta}<Fit w={86} className="ml-[3px] pt-[1px]">Textual Analysis2</Fit></div>
      <div className="flex h-[24px] w-[130px] items-center border border-l-0 border-b-0 border-[#8d9096] bg-gradient-to-b from-[#eee] to-[#cdcdcd] pl-[8px] pt-[3px]">{I.cls}<Fit w={74} className="ml-[3px] pt-[1px]">Class Diagram1</Fit></div>
    </div>
  );
}

function EditorToolbars() {
  const serif = "font-['Liberation_Serif'] text-[17px] leading-[18px] text-black";
  return (
    <div className="flex h-[54px] shrink-0 flex-col bg-[#efefef]">
      <div className="flex h-[30px] items-center">
        <Cell cls="ml-[2px] w-[24px]">{I.bigdoc}</Cell>
        <Sep cls="ml-[4px] h-[22px]" />
        <Cell cls="ml-[5px] w-[24px]">{I.imp}</Cell>
        <Cell cls="ml-[4px] w-[24px]">{I.exp}</Cell>
        <Sep cls="ml-[4px] h-[22px]" />
        <Cell cls="ml-[8px] w-[24px]">{I.marker}</Cell>
        <Cell cls="ml-[2px] w-[24px]">{I.rect}</Cell>
        <div className="ml-[4px] flex h-[24px] w-[24px] shrink-0 items-start font-['Liberation_Serif'] text-[18px] leading-[18px] text-[#3c4044]"><span>A</span><span className="mt-[6px] -ml-[1px] text-[17px] font-bold text-[#5a5f64]">a</span></div>
        <Sep cls="ml-[4px] h-[22px]" />
        <Cell cls="ml-[4px] h-[26px] w-[27px] rounded-[3px] border border-[#555] bg-[#b9b9b9]">{I.tog1}</Cell>
        <Cell cls="ml-[2px] w-[26px]">{I.tog2}</Cell>
      </div>
      <div className="flex h-[24px] items-center">
        <Cell cls={'w-[18px] font-bold ' + serif}>B</Cell>
        <Cell cls={'w-[18px] italic ' + serif}>I</Cell>
        <Cell cls={'w-[18px] underline underline-offset-2 ' + serif}>u</Cell>
        <Cell cls="w-[18px]">{I.alL}</Cell>
        <Cell cls="w-[18px]">{I.alC}</Cell>
        <Cell cls="w-[18px]">{I.alR}</Cell>
        <Cell cls="w-[18px]">{I.num}</Cell>
        <Cell cls="w-[18px]">{I.bul}</Cell>
        <Cell cls={'w-[18px] [-webkit-text-stroke:0.4px_black] ' + serif}>F</Cell>
        <Cell cls={'w-[18px] [-webkit-text-stroke:0.4px_black] ' + serif}>F<span className="mt-[4px] text-[11px]">F</span></Cell>
        <Cell cls="w-[18px]">{I.pal}</Cell>
        <Cell cls="ml-[3px] w-[18px]">{I.tbl}</Cell>
        <Arrow cls="ml-[1px]" />
        <Cell cls="ml-[1px] w-[16px]">{I.paint}</Cell>
        <Cell cls="ml-[2px] w-[16px]">{I.greenf}</Cell>
        <Cell cls="ml-[3px] w-[14px]">{I.plus}</Cell>
        <Arrow cls="ml-[4px]" />
        <div className="ml-auto mr-[2px]">{I.bino}</div>
      </div>
    </div>
  );
}

type Seg = { t: string; w: number; hl?: 'y' | 'g' };
type Line = { clock?: boolean; segs: Seg[] };
const LINES: Line[] = [
  { segs: [{ t: '(Priorytet A)', w: 117 }] },
  { clock: true, segs: [{ t: 'Stworzenie działającego ', w: 239 }, { t: 'kalendarza', w: 104, hl: 'y' }, { t: ' ', w: 5 }, { t: 'wyświetlającego', w: 156, hl: 'g' }, { t: ' wszystkie daty .', w: 155 }] },
  { clock: true, segs: [{ t: 'Wprowadzenie opcji ', w: 200 }, { t: 'przemieszczania', w: 161.5, hl: 'g' }, { t: ' się pomiędzy miesiącami / latami.', w: 329 }] },
  { segs: [{ t: '(Priorytet B)', w: 117 }] },
  { clock: true, segs: [{ t: 'Wprowadzenie opcji ', w: 200 }, { t: 'wyszukiwanie', w: 129.5, hl: 'g' }, { t: ' konkretnego miesiąca, dnia , ew. godziny.', w: 404 }] },
  { clock: true, segs: [{ t: 'Rozbudowanie o opcję ', w: 226 }, { t: 'dodawania', w: 104, hl: 'g' }, { t: ' ', w: 6 }, { t: 'wydarzeń', w: 92, hl: 'y' }, { t: ' do konkretnego dnia i godziny.', w: 297 }] },
  { clock: true, segs: [{ t: 'Rozbudowanie opcji ', w: 200 }, { t: 'wydarzeń', w: 92, hl: 'y' }, { t: ' o długość ich trwania, z dokładnością do minuty.', w: 465 }] },
  { segs: [{ t: '(Priorytet C)', w: 118 }] },
  { clock: true, segs: [{ t: 'Rozbudowanie o opcje ', w: 226 }, { t: 'dodawania', w: 104, hl: 'g' }, { t: ' opisów ', w: 81 }, { t: 'wydarzeń', w: 92, hl: 'y' }, { t: '.', w: 5 }] },
  { clock: true, segs: [{ t: 'Umożliwienie użytkownikowi ', w: 275 }, { t: 'dodawania', w: 104, hl: 'g' }, { t: ' ', w: 6 }, { t: 'przypomnienia', w: 141, hl: 'y' }, { t: ' do konkretnego wydarzenia.', w: 273 }] },
];
const CORRECT = new Set(['A', 'B', 'C', 'o', 'z', 'do', 'ew']);

const Clock = () => (
  <Svg s={17} className="mr-[8px] mt-[6px]">
    <circle cx="8.500" cy="8.500" r="7.800" stroke="#333" strokeWidth=".9" />
    <circle cx="8.500" cy="8.500" r="6.300" stroke="#555" strokeWidth="1" strokeDasharray="1 2.300" />
    <path d="M8.500 9.500V2.500M8.500 9.500L10.500 3.500" stroke="#222" strokeWidth="1" />
  </Svg>
);

function Words({ t }: { t: string }) {
  return (
    <>
      {t.split(/([^\s().,/]+)/).map((p, i) =>
        i % 2 === 1 && !CORRECT.has(p) ? (
          <span key={i} className="relative">
            {p}
            <svg className="absolute bottom-[-1px] left-0 h-[3px] w-full overflow-hidden" fill="none"><path d={ZIGZAG} stroke="#c4141e" strokeWidth="1.1" /></svg>
          </span>
        ) : (
          <span key={i}>{p}</span>
        ),
      )}
    </>
  );
}

function Document() {
  return (
    <div className="flex h-[551px] w-[1048px] shrink-0 overflow-hidden border border-b-0 border-black bg-white">
      <div className="-mt-px min-w-0 flex-1 pl-[41px] font-['Liberation_Sans'] text-[22px] leading-[31px] text-black">
        {LINES.map((l, i) => (
          <div key={i} className="mb-[29px] flex h-[29px] whitespace-pre">
            {l.clock && <Clock />}
            {l.segs.map((s, j) => (
              <Fit key={j} w={s.w} className={'h-[29px] ' + (s.hl === 'y' ? 'bg-[#ffff00]' : s.hl === 'g' ? 'bg-[#4cb64c]' : '')}><Words t={s.t} /></Fit>
            ))}
          </div>
        ))}
      </div>
      <div className="flex w-[16px] flex-col items-center border-r border-white bg-[#f0f0f0]">
        <div className="flex h-[17px] items-center"><Svg s={7} h={4}><path d="M3.500 0L7 4H0Z" fill="#444" /></Svg></div>
        <div className="mt-[80px] flex h-[435px] w-[15px] flex-col items-center justify-center gap-[2px] rounded-[2px] border border-[#979797] bg-gradient-to-r from-[#f5f5f5] to-[#d0d0d0]">
          <div className="h-px w-[6px] bg-[#555]" /><div className="h-px w-[6px] bg-[#555]" /><div className="h-px w-[6px] bg-[#555]" />
        </div>
        <div className="flex h-[17px] items-center"><Svg s={7} h={4}><path d="M0 0H7L3.500 4Z" fill="#444" /></Svg></div>
      </div>
    </div>
  );
}

function Candidates() {
  const th = 'flex h-[18px] shrink-0 items-center justify-center rounded-[2px] border border-t-[#fff] border-l-[#fff] border-[#8a8a8a] bg-gradient-to-b from-[#f7f7f7] to-[#d3d3d3] pt-[1px] font-bold ';
  return (
    <div className="flex h-[37px] shrink-0 flex-col bg-[#efefef]">
      <div className="flex h-[9px] items-center pl-[3px]"><Svg s={24} h={6}><path d="M1 6L6.500 0L12 6ZM12 0H24L18 6Z" fill="#000" /></Svg></div>
      <div className="flex h-[28px] w-[1169px] flex-col border border-[#777] pl-[2px] pt-[1px]">
        <div className="flex h-[19px] w-[1148px] gap-[2px] overflow-hidden border-b border-[#888] bg-[#999]">
          <div className={th + 'w-[33px]'}><Fit w={18}>No.</Fit></div>
          <div className={th + 'w-[118px]'}><Fit w={89}>Candidate Class</Fit></div>
          <div className={th + 'w-[128px]'}><Fit w={84}>Extracted Text</Fit></div>
          <div className={th + 'w-[88px]'}><Fit w={28}>Type</Fit></div>
          <div className={th + 'w-[1150px]'}><Fit w={64}>Description</Fit></div>
        </div>
        <div className="flex h-[7px] pl-[7px]">
          <div className="flex h-[6px] w-[777px] items-center justify-center gap-[1px] rounded-[2px] border border-[#999] bg-gradient-to-b from-white to-[#c4c0c4]">
            <div className="h-[5px] w-px bg-[#777]" /><div className="h-[5px] w-px bg-[#777]" /><div className="h-[5px] w-px bg-[#777]" /><div className="h-[5px] w-px bg-[#777]" />
          </div>
        </div>
      </div>
    </div>
  );
}

function Editor() {
  return (
    <main className="flex h-[707px] w-[1223px] shrink-0 flex-col">
      <EditorTabs />
      <div className="mt-px flex h-[678px] w-[1222px] flex-col border-b-2 border-r-2 border-t border-black border-b-[#111] border-r-[#1b6d86] bg-[#b9d1ea]">
        <div className="flex h-[21px] shrink-0 items-center bg-gradient-to-b from-[#93afce] to-[#b7cfe9] pl-[4px] pr-[5px]">
          <Svg s={16} vb="0 0 18 18"><rect x="1.500" y="2.500" width="14" height="9" fill="#c9e1ef" stroke="#d9e6f0" /><path d="M4 5H8M9 8H13" stroke="#8bb46f" strokeWidth="1.600" /><rect x="1.500" y="12.500" width="14" height="3" fill="#fff" stroke="#5985b5" /></Svg>
          <Fit w={95} className="ml-[13px] font-['Liberation_Sans'] text-[12px]">Textual Analysis2</Fit>
          <div className="ml-auto flex gap-[2px]">
            <div className="flex h-[17px] w-[28px] items-center justify-center rounded-[2px] border border-[#6d7f95] bg-gradient-to-b from-[#cfdeee] to-[#a5bedb] shadow-[inset_0_0_0_1px_#dbe8f5]"><Svg s={12}><path d="M5.500 1.500H10.500V6.500H5.500ZM1.500 5.500H7.500V10.500H1.500Z" stroke="#535c6b" strokeWidth="2.800" /><path d="M5.500 1.500H10.500V6.500H5.500ZM1.500 5.500H7.500V10.500H1.500Z" stroke="#fff" strokeWidth="1.200" /></Svg></div>
            <div className="flex h-[17px] w-[28px] items-center justify-center rounded-[2px] border border-[#5b2020] bg-[linear-gradient(180deg,#e0a097_0%,#cf6b5c_45%,#b73a28_50%,#cf6750_100%)]"><Svg s={12}><path d="M2 2.500L10 9.500M10 2.500L2 9.500" stroke="#6b4444" strokeWidth="4" /><path d="M2 2.500L10 9.500M10 2.500L2 9.500" stroke="#fff" strokeWidth="2.400" /></Svg></div>
          </div>
        </div>
        <div className="flex h-[654px] border-b-2 border-[#59c9e3]">
          <div className="w-[9px] shrink-0 border-l border-r border-l-black border-r-[#eef4fa] bg-[#bcd3ea]" />
          <div className="flex w-[1205px] shrink-0 flex-col">
            <EditorToolbars />
            <div className="flex h-[599px] border-t border-[#6a6a6a]">
              <div className="flex w-[35px] shrink-0 flex-col items-center border-r border-white bg-[#808080] pt-[8px]">
                <Svg s={22} h={14}><rect x="1" y=".5" width="20" height="13" fill="#111" /><path d="M2 4.500H20M2 7.500H20M2 10.500H20M5.500 1V13M9.500 4V13M13.500 4V13M17.500 1V13" stroke="#8a8a8a" strokeWidth=".9" /></Svg>
                <Svg s={24} className="ml-[5px] mt-[12px]"><path d="M2 21C4 20 5 17 7 17" stroke="#111" strokeWidth="1.500" /><path d="M5 13L14 4L20 2L21 8L11 17L7 19Z" fill="#151515" /><path d="M7 12L13 17M10 9L16 14M13 6L19 10M8 17L20 4M6 14L16 3" stroke="#777" strokeWidth=".7" /></Svg>
              </div>
              <div className="flex min-w-0 flex-1 flex-col bg-[#808080]">
                <div className="flex h-[561px] pl-[61px] pt-[10px]"><Document /></div>
                <Candidates />
              </div>
            </div>
          </div>
          <div className="flex-1 border-r border-[#43c8e6] bg-gradient-to-b from-[#b9d1ea] via-[#d8e6f4] to-[#b9d1ea] [background-size:100%_200px] bg-no-repeat" />
        </div>
      </div>
    </main>
  );
}

function Message() {
  return (
    <section className="flex h-[54px] shrink-0 flex-col bg-[#f2f2f2] px-[4px] pt-[7px]">
      <PanelHead title="Message" w={42} />
      <div className="-mt-px h-[24px] border border-[#828790] bg-white" />
    </section>
  );
}

const TB = 'flex h-[39px] w-[58px] shrink-0 items-center justify-center rounded-[3px] border border-[#93a0ab] bg-gradient-to-br ';
const TB_DARK = 'from-[#8b959d] via-[#4c5963] to-[#394853] ';

function Taskbar() {
  return (
    <footer className="flex h-[41px] shrink-0 items-center border-t border-[#6c8194] bg-[linear-gradient(90deg,#16242f_0%,#1d313f_12%,#12293a_35%,#173045_50%,#1c3a4f_58%,#112330_65%,#1d3b50_75%,#12232f_88%,#101c26_100%)] font-['Noto_Sans'] text-[11px] text-white">
      <Svg s={40} className="ml-[7px]"><circle cx="20" cy="20" r="18" fill="url(#orb)" stroke="#7e9db3" /><path d="M4 16C8 4 32 4 36 16C28 12 12 12 4 16Z" fill="#fff" opacity=".25" /><path d="M12 13C15 11 17 12 19 13L17 20C15 19 13 19 10 20Z" fill="#e8622c" /><path d="M20.500 13.500C23 15 26 15 29 13.500L27 20.500C24 22 21 21.500 18.500 20.500Z" fill="#9ac93c" /><path d="M9.500 21.500C12 20 14.500 20.500 16.500 21.500L14.500 28.500C12.500 27.500 10 27.500 7.500 28.500Z" fill="#4aa6e0" /><path d="M18 22C21 23.500 24 23.500 26.500 22L24.500 29C22 30.500 19 30.500 16 29Z" fill="#f8cb39" /></Svg>
      <div className={TB + TB_DARK + 'ml-[13px]'}><Svg s={36} h={32}><path d="M3 3H12L14 5H30L34 8V27H2Z" fill="#f0dd8c" stroke="#b79a4c" /><path d="M6 3H12V6H6Z" fill="#2da644" /><path d="M14 5H19V7H14Z" fill="#d24b35" /><path d="M24 7H29V9H24Z" fill="#4c8fd8" /><path d="M2 10H34V28H2Z" fill="#f8edae" stroke="#d5bd6c" /><path d="M7 31V21C7 18 29 18 29 21V31H24V24H12V31Z" fill="#8fcdf0" stroke="#4c93bd" /></Svg></div>
      <Svg s={30} className="ml-[18px]"><rect x="14" y="3" width="13" height="22" fill="#4d87b8" stroke="#9ec4e3" /><rect x="9" y="3" width="14" height="22" fill="#5b9bd0" stroke="#9ec4e3" /><rect x="3" y="3" width="16" height="22" fill="#6ea7d6" stroke="#9ec4e3" /><circle cx="11.500" cy="14" r="8.500" fill="#f0792a" stroke="#fac79a" /><path d="M9 9.500L16.500 14L9 18.500Z" fill="#fff" /></Svg>
      <Svg s={32} h={36} className="ml-[32px]"><path d="M3 3H27V33H3Z" fill="#fff" stroke="#bbb" /><path d="M4 18H26V32H4Z" fill="url(#grn)" /><path d="M3 3H27" stroke="#777" strokeWidth="3" strokeDasharray="1.500 1.500" /><path d="M8 21V12H12V20M14 15H19M16.500 12.500V17.500M20 15H25M22.500 12.500V17.500" stroke="#111" strokeWidth="1.300" /><path d="M28 3L31 5L21 26L18 28V24Z" fill="#e9a82b" stroke="#8a5711" strokeWidth=".8" /></Svg>
      <div className={TB + TB_DARK + 'ml-[18px]'}><Svg s={34}><circle cx="17" cy="16" r="13.500" fill="#2461a8" /><path d="M3 9C1 22 6 31 17 32C27 32 33 24 32 15C31 10 29 7 27 5C29 12 27 21 20 22C14 23 10 19 11 14L16 13L14 10L10 10L8 5Z" fill="url(#ffx)" /><path d="M14 7C19 3 26 6 26 13C24 11 22 10 20 11Z" fill="#5fa9de" /></Svg></div>
      <Svg s={34} className="ml-[16px]"><path d="M3 4V14C3 16 11 16 11 14V4" fill="#e3ad1f" stroke="#9b7413" /><ellipse cx="7" cy="4" rx="4" ry="2" fill="#ffe079" /><path d="M15 4H26V16M3 20V28H12" stroke="#49b34b" strokeWidth="1.600" strokeDasharray="2 2" /><path d="M14 32L28 18M29 31L16 17" stroke="#c8d0d8" strokeWidth="2.800" /><path d="M22 17L27 15L32 20L30 23Z" fill="#8d98a4" /><path d="M12 20L15 15L19 19L15 22Z" fill="#dfe5ea" /></Svg>
      <Svg s={34} className="ml-[28px]"><path d="M18 2L3 17L18 32L22 28C15 26 11 21 12 15C13 11 16 9 18 9Z" fill="#b4243b" /><path d="M18 2L3 17H12C12 12 14 9 18 9Z" fill="#d2808a" /><circle cx="23" cy="17" r="4.500" fill="#b4243b" /></Svg>
      <Svg s={26} h={36} className="ml-[29px]"><rect x="0" y="1" width="26" height="33" fill="#2a2a2a" /><path d="M2.500 2V34M23.500 2V34" stroke="#777" strokeWidth="2" strokeDasharray="3 2.500" /><rect x="6" y="1" width="14" height="3" fill="#ef6a6a" /><rect x="6" y="6" width="14" height="8" fill="#f7f15d" /><rect x="6" y="16" width="14" height="9" fill="#46ea55" /><rect x="6" y="27" width="14" height="7" fill="#4557ef" /></Svg>
      <div className="ml-[22px] flex h-[39px] w-[50px] shrink-0 items-center justify-center rounded-[3px] border border-[#93a0ab] bg-gradient-to-br from-[#8b959d] via-[#4c5963] to-[#394853]"><Svg s={30}><rect x="1" y="1" width="28" height="28" rx="1" fill="#c9100f" stroke="#8c0806" /><path d="M13.500 5.500C16 4 16.500 8 15 12C13.500 17 10 22 7.500 23.500C5.500 24 6 21 9 19.500C14 17.500 20 16.500 23.500 17.500C25 19 22 20 19 18C15.500 15.500 12.500 10 13.500 5.500Z" stroke="#fff" strokeWidth="1.500" /></Svg></div>
      <div className="flex gap-[1px]"><div className="h-[39px] w-[3px] rounded-r border-r border-[#8b98a2] bg-[#4a5863]" /><div className="h-[39px] w-[3px] rounded-r border-r border-[#8b98a2] bg-[#34434f]" /></div>
      <div className={TB + TB_DARK + 'ml-[3px]'}><Svg s={34} h={30}><path d="M2 4L23 2L32 7L11 10Z" fill="#7c4a34" /><path d="M2 4L11 10V14L2 10Z" fill="#eee" /><path d="M11 8L32 6V12L11 14Z" fill="#b0418c" stroke="#5c1b46" strokeWidth=".7" /><path d="M2 12L11 15L32 13V19L11 21L2 17Z" fill="#2b57c0" stroke="#122b6b" strokeWidth=".7" /><path d="M2 20L11 22L32 20V26L11 28L2 25Z" fill="#28953a" stroke="#0f501a" strokeWidth=".7" /><path d="M2 14L10 17V20L2 17ZM2 21L10 24V27L2 24Z" fill="#eee" /><path d="M20 3L24 4V28H20Z" fill="#cf9b3c" stroke="#704d12" strokeWidth=".7" /><rect x="19" y="13" width="6" height="5" fill="#ddd" stroke="#333" /></Svg></div>
      <div className={TB + TB_DARK + 'ml-[4px]'}><Svg s={34}><path d="M8 6V32M3 9H16C31 9 31 26 16 26H4M8 17H26" stroke="#0c0c0c" strokeWidth="1.800" /><path d="M16 11L21 20H11Z" stroke="#e87722" strokeWidth="1.800" /><rect x="6" y="2" width="5" height="5" fill="#2bea2b" /></Svg></div>
      <div className={TB + 'ml-[4px] from-[#b5bbc0] via-[#959da3] to-[#c3c8cc]'}><Svg s={34}><Diamond fill="#cf3239" line="#a9afb3" /></Svg></div>
      <div className="ml-auto flex items-center">
        <Fit w={13} className="-mt-[6px]">PL</Fit>
        <Svg s={18} className="ml-[7px] -mt-[6px]"><path d="M8 5C9 1 12 6 15 2" stroke="#ccc" /><rect x="1" y="7" width="15" height="9" rx="1" fill="#c9ced2" /><path d="M3 9.500H14M3 11.500H14M5 14H12" stroke="#45505a" strokeDasharray="1.500 .8" /></Svg>
        <Svg s={8} h={5} className="ml-[11px]"><path d="M4 0L8 5H0Z" fill="#fff" /></Svg>
        <Svg s={18} className="ml-[12px]"><rect x="5.500" y="4.500" width="10" height="8" stroke="#fff" strokeWidth="1.500" /><path d="M7 16H14M10.500 13V16M3.500 7V15H6M1.500 2V5H5.500V2" stroke="#fff" strokeWidth="1.300" /></Svg>
        <Svg s={16} className="ml-[8px]"><path d="M1 5.500H4L8 2V14L4 10.500H1Z" fill="#fff" /><path d="M10 5C12 7 12 9 10 11" stroke="#fff" /></Svg>
        <div className="ml-[16px] flex w-[59px] flex-col items-center leading-[17px]"><Fit w={27}>18:48</Fit><Fit w={58}>2015-01-28</Fit></div>
        <div className="ml-[12px] h-[39px] w-[14px] border border-[#718390] bg-gradient-to-br from-[#74828d] to-[#1c2a34]" />
      </div>
    </footer>
  );
}

export default function App() {
  return (
    <div className={'flex h-[901px] w-[1440px] flex-col overflow-hidden bg-[#efefef] text-black ' + UI}>
      <Defs />
      <TitleBar />
      <MenuBar />
      <MainToolbar />
      <div className="flex h-[707px] shrink-0">
        <aside className="w-[217px] shrink-0"><Navigator /><Property /></aside>
        <Editor />
      </div>
      <Message />
      <Taskbar />
    </div>
  );
}
